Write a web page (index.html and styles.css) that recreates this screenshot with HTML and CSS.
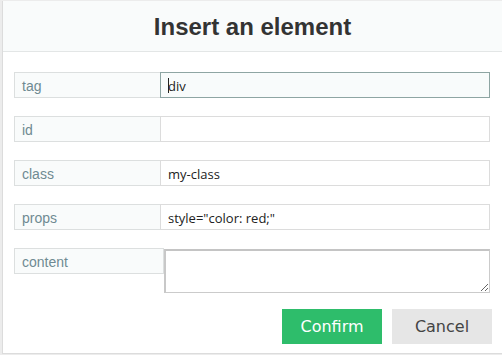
FILE: index.html
```html
<!DOCTYPE html>
<html>
<head>
<meta charset="utf-8">
<link rel="stylesheet" href="styles.css">
</head>
<body>
<div class="modal">
  <div class="header"><h1 class="title">Insert an element</h1></div>
  <div class="body">
    <div class="row">
      <label class="label">tag</label>
      <span class="field-wrap">
        <input class="field focused" type="text" value="div">
        <span class="caret"></span>
      </span>
    </div>
    <div class="row">
      <label class="label">id</label>
      <input class="field" type="text" value="">
    </div>
    <div class="row">
      <label class="label">class</label>
      <input class="field" type="text" value="my-class">
    </div>
    <div class="row">
      <label class="label">props</label>
      <input class="field" type="text" value='style="color: red;"'>
    </div>
    <div class="row row-content">
      <label class="label label-content">content</label>
      <textarea class="area"></textarea>
    </div>
    <div class="actions">
      <button class="btn btn-confirm">Confirm</button>
      <button class="btn btn-cancel">Cancel</button>
    </div>
  </div>
</div>
</body>
</html>
```
FILE: styles.css
```css
html, body {
  margin: 0;
  padding: 0;
  background: #ececec;
  width: 502px;
  height: 355px;
  overflow: hidden;
}
.modal {
  margin: 1px 0 0 2px;
  width: 499px;
  height: 352px;
  background: #fff;
  border-left: 1px solid #dcdcdc;
  border-bottom: 1px solid #dcdcdc;
  display: flex;
  flex-direction: column;
}
.header {
  height: 50px;
  background: #f9fbfb;
  border-bottom: 1px solid #e3e6e6;
  display: flex;
  align-items: center;
  justify-content: center;
}
.title {
  margin: 0;
  font-family: "Liberation Sans", Arial, sans-serif;
  font-weight: bold;
  font-size: 24px;
  color: #333;
  position: relative;
  top: 1px;
}
.body {
  padding: 20px 12px 0 11px;
  display: flex;
  flex-direction: column;
  gap: 18px;
}
.row {
  display: flex;
  height: 26px;
}
.label {
  box-sizing: border-box;
  width: 146px;
  height: 26px;
  border: 1px solid #dcdfdf;
  border-right: none;
  background: #f9fbfb;
  font-family: "Liberation Sans", Arial, sans-serif;
  font-size: 14px;
  color: #6f8a92;
  padding: 1px 0 0 7px;
  display: flex;
  align-items: center;
}
.field-wrap {
  position: relative;
  display: block;
  width: 330px;
  height: 26px;
}
.caret {
  position: absolute;
  left: 8px;
  top: 6px;
  width: 1px;
  height: 15px;
  background: #222;
}
.field {
  box-sizing: border-box;
  width: 330px;
  height: 26px;
  margin: 0;
  border: 1px solid #dcdcdc;
  background: #fff;
  font-family: "Open Sans", sans-serif;
  font-size: 13px;
  color: #222;
  padding: 1px 0 0 7px;
  outline: none;
  border-radius: 0;
}
.field.focused {
  border-color: #8ea5a3;
  background: #f8fbfb;
}
.row-content {
  height: 45px;
}
.label-content {
  width: 150px;
  border-right: 1px solid #dcdfdf;
}
.area {
  box-sizing: border-box;
  width: 326px;
  height: 44px;
  margin: 1px 0 0 0;
  border: 1px solid #cbcbcb;
  border-top: 2px solid #c4c4c4;
  border-left: 2px solid #c8c8c8;
  background: #fff;
  outline: none;
  border-radius: 0;
  padding: 2px;
}
.actions {
  display: flex;
  justify-content: flex-end;
  gap: 10px;
  margin-top: -2px;
  margin-right: -2px;
}
.btn {
  width: 100px;
  height: 35px;
  border: none;
  border-radius: 0;
  font-family: "DejaVu Sans", Verdana, sans-serif;
  font-size: 16px;
  padding: 0;
  cursor: pointer;
}
.btn-confirm {
  background: #2ebd6b;
  color: #fff;
}
.btn-cancel {
  background: #e6e6e6;
  color: #444;
}
```
